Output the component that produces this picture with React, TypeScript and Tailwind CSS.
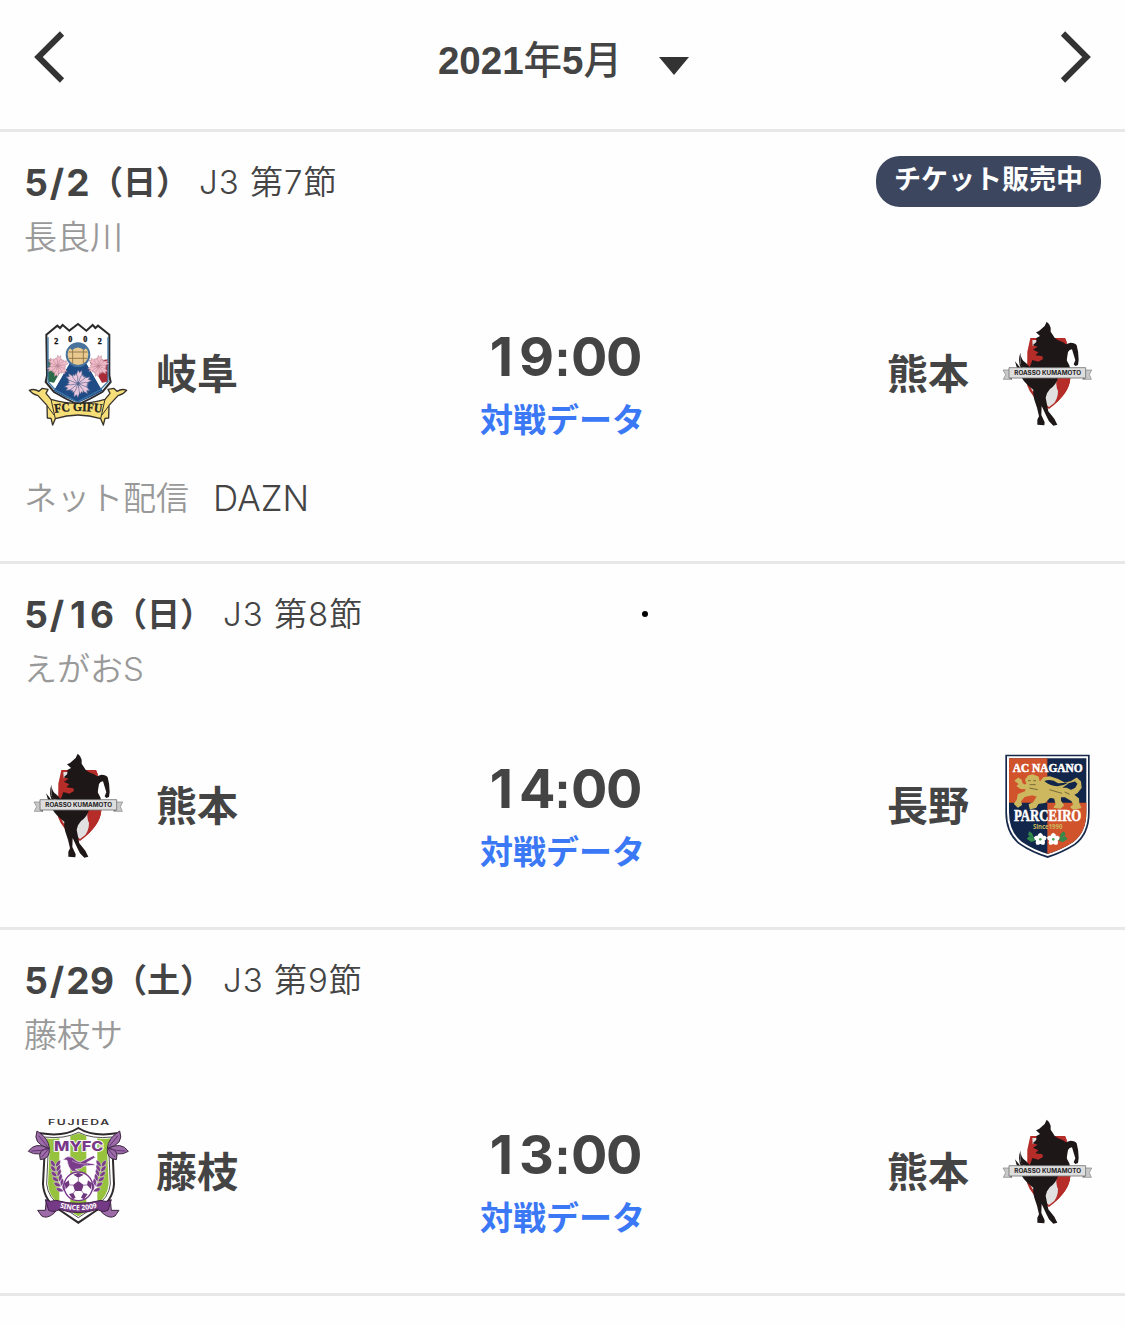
type Team = "gifu" | "kumamoto" | "nagano" | "fujieda";

interface Match {
  date: string;
  day: string;
  round: string;
  venue: string;
  time: string;
  home: Team;
  away: Team;
  ticket?: boolean;
  net?: string;
}

const TEAM_NAMES: Record<Team, string> = {
  gifu: "岐阜",
  kumamoto: "熊本",
  nagano: "長野",
  fujieda: "藤枝",
};

const matches: Match[] = [
  { date: "5/2", day: "（日）", round: "7", venue: "長良川", time: "19:00", home: "gifu", away: "kumamoto", ticket: true, net: "DAZN" },
  { date: "5/16", day: "（日）", round: "8", venue: "えがおS", time: "14:00", home: "kumamoto", away: "nagano" },
  { date: "5/29", day: "（土）", round: "9", venue: "藤枝サ", time: "13:00", home: "fujieda", away: "kumamoto" },
];

const PETALS = [0, 30, 60, 90, 120, 150, 180, 210, 240, 270, 300, 330];

function Flower({ x, y, r, fill, line }: { x: number; y: number; r: number; fill: string; line: string }) {
  return (
    <g transform={`translate(${x} ${y}) scale(${r / 40})`}>
      {PETALS.map((a, i) => (
        <path
          key={a}
          d={i % 2 ? "M0 0L-7 -22L-3 -30L0 -25L4 -30L7 -20Z" : "M0 0L-8 -26L-5 -39L0 -32L6 -39L8 -24Z"}
          fill={fill}
          stroke={line}
          strokeWidth="1.6"
          transform={`rotate(${a + 8})`}
        />
      ))}
      <circle r="4" fill={line} />
    </g>
  );
}

function GifuLogo() {
  return (
    <svg viewBox="12 30 324 324" className="size-[108px] shrink-0">
      <path d="M79 74L112 47L120 54L128 45L148 62L174 42L199 62L218 45L226 54L234 47L268 74V196L272 216L247 246Q213 266 174 284Q135 266 102 246L77 216L81 196Z" fill="#fff" stroke="#2b2a2c" strokeWidth="6" />
      <path d="M84 148L140 156L104 222L84 214Z" fill="#2c6b49" />
      <path d="M264 148L208 156L244 222L264 214Z" fill="#a92b38" />
      <path d="M150 156L198 156L248 242Q210 264 174 278Q136 264 101 242Z" fill="#204c86" />
      <path d="M140 153L150 158L106 234L86 216L102 218ZM208 153L198 158L242 234L264 216L246 218Z" fill="#fff" />
      <path d="M84 82V215L106 240L172 276L240 240L264 215V82" fill="none" stroke="#3f78a8" strokeWidth="4" />
      <Flower x={113} y={168} r={33} fill="#f0bcc9" line="#b98494" />
      <Flower x={235} y={168} r={33} fill="#f0bcc9" line="#b98494" />
      <Flower x={174} y={221} r={42} fill="#eac7dc" line="#52658f" />
      <circle cx="174" cy="134" r="34" fill="#e9c98e" stroke="#47739c" strokeWidth="6" />
      <path d="M158 110V160M190 110V160M145 126H203M146 145H202M158 110Q174 100 190 110" fill="none" stroke="#866d43" strokeWidth="2.5" />
      <path d="M146 111Q174 90 202 111L192 120Q174 105 156 120Z" fill="#47739c" />
      <g fontFamily="Liberation Serif" fontWeight="700" fontSize="24" fill="#111" stroke="#111" strokeWidth="1" textAnchor="middle">
        <text x="109" y="103">2</text>
        <text x="151" y="96">0</text>
        <text x="196" y="96">0</text>
        <text x="239" y="103">2</text>
      </g>
      <path d="M28 241Q42 235 57 244L67 235L84 238L78 250L93 268Q174 292 255 268L270 250L264 238L281 235L291 244Q306 235 320 241Q308 254 294 257L267 286L266 324L255 325L250 345L242 326Q174 304 106 326L98 345L93 325L82 324L81 286L54 257Q40 254 28 241Z" fill="#f6df79" stroke="#37322b" strokeWidth="4" strokeLinejoin="round" />
      <path d="M93 268L106 326M255 268L242 326M82 288L102 315M266 288L246 315" fill="none" stroke="#37322b" strokeWidth="3" />
      <path id="gifu-arc" d="M104 308Q174 298 246 308" fill="none" />
      <text fontFamily="Liberation Serif" fontWeight="700" fontSize="38" fill="#262521" stroke="#262521" strokeWidth="1">
        <textPath href="#gifu-arc" startOffset="0" textLength="142" lengthAdjust="spacingAndGlyphs">FC GIFU</textPath>
      </text>
    </svg>
  );
}

function KumamotoLogo() {
  return (
    <svg viewBox="9 30 324 324" className="size-[108px] shrink-0">
      <path d="M121 84H225L230 96V172L241 205Q239 250 177 297Q123 265 111 225L112 125Z" fill="#b52c28" />
      <path d="M127 90H142L136 104L128 109ZM187 90H220L224 103V170H180ZM121 206H207Q197 229 205 243Q212 260 201 273L177 291Q127 255 119 225Z" fill="#e1e1e2" />
      <path d="M186 84H225L230 96V128L222 108L206 95L190 92Z" fill="#b52c28" />
      <path d="M201 205H241Q238 249 185 290Q205 266 204 242Q195 224 201 205Z" fill="#b52c28" />
      <path d="M170 35L177 42L182 53V65L190 77Q194 86 208 92Q221 96 228 103L241 98Q256 98 260 106Q266 126 266 150L264 165L256 168L251 163L256 151L246 118Q238 119 234 126L230 151L238 166L240 174H110L96 170L91 160L91 128Q93 151 108 159L119 171L123 162L127 150L145 155L159 147L157 139L136 136L145 127L129 119L143 110L128 106L139 96L139 84L150 78L138 67L147 63L164 48Z" fill="#1e1718" />
      <path d="M101 204H204Q199 224 180 237L171 250L167 263L175 304L193 326L202 344L190 347L177 334L169 318L155 288L154 315L164 337L163 346L142 344V329L147 319L141 293L133 269Q128 250 130 239Q106 222 94 202Z" fill="#1e1718" />
      <path d="M75 154Q82 182 94 204H119L90 159L91 128Q82 156 94 177Z" fill="#1e1718" />
      <path d="M39 180L62 180V208H40L47 194ZM305 180L283 180V208H304L298 194Z" fill="#c9c9ca" stroke="#818181" strokeWidth="2" />
      <path d="M57 173H287V204H57Z" fill="#dededf" stroke="#747474" strokeWidth="2.5" />
      <path d="M57 204L66 211V204M287 204L278 211V204" fill="#777" />
      <text x="173" y="195" textAnchor="middle" textLength="200" lengthAdjust="spacingAndGlyphs" fontFamily="Inter" fontWeight="700" fontSize="17" fill="#242122">ROASSO KUMAMOTO</text>
    </svg>
  );
}

function Blossom({ x }: { x: number }) {
  return (
    <g transform={`translate(${x} 292)`}>
      {[0, 72, 144, 216, 288].map((a) => (
        <path key={a} d="M0 2L-9 -8L-6 -16L0 -20L6 -16L9 -8Z" fill="#fff" transform={`rotate(${a})`} />
      ))}
      <circle r="4" fill="#50a45a" />
    </g>
  );
}

function NaganoLogo() {
  return (
    <svg viewBox="9 30 324 324" className="size-[108px] shrink-0">
      <path d="M46 38H299V211Q299 278 256 309Q219 333 173 348Q125 333 90 309Q46 278 46 211Z" fill="#15284a" />
      <path d="M51 43H294V211Q294 274 253 305Q217 328 173 342Q128 328 93 305Q51 274 51 211Z" fill="#fff" />
      <path d="M57 49H289V211Q289 271 250 300Q215 323 173 336Q130 323 96 300Q57 271 57 211Z" fill="#11264a" />
      <path d="M57 49H172V182H57ZM172 182H289V211Q289 271 250 300Q215 323 172 336Z" fill="#d0532c" />
      <path d="M76 116L85 109L93 114L96 125L104 130L111 126L107 113L116 102L129 99L144 105L147 118L155 125L176 131L207 139L229 139L243 146L257 139L265 125L256 116L235 122L216 136L189 140L161 131L152 119L161 108L179 105L202 112L224 124L244 119L260 109L271 119L273 137L262 151L250 158L265 170L266 184L272 197L250 201L243 195L252 188L246 176L226 164L211 164L211 177L220 190L211 198L193 196L199 187L194 168L180 165L164 181L144 184L137 196L121 200L118 188L131 182L143 162L127 158L103 163L91 177L94 188L84 195L74 185L82 174L85 158L107 149L109 140L93 139L82 132L89 126Z" fill="#cdb85f" stroke="#cdb85f" strokeWidth="4" strokeLinejoin="round" />
      <path d="M163 117Q185 108 204 124L235 122Q218 132 202 133Q178 132 163 117Z" fill="#11264a" />
      <path d="M114 116H122M130 116H138M119 128H137M118 138L143 143M178 143L216 154M224 150L239 157" stroke="#776a36" strokeWidth="3" fill="none" />
      <g textAnchor="middle" fontWeight="700" fill="#fff">
        <text x="173" y="90" textLength="210" lengthAdjust="spacingAndGlyphs" fontFamily="Liberation Serif" stroke="#fff" strokeWidth="1.5" fontSize="36">AC NAGANO</text>
        <text x="173" y="237" textLength="202" lengthAdjust="spacingAndGlyphs" fontFamily="Liberation Serif" stroke="#fff" strokeWidth="1.5" fontSize="47">PARCEIRO</text>
        <text x="173" y="260" textLength="88" lengthAdjust="spacingAndGlyphs" fontFamily="Noto Sans" fontSize="20" fill="#cdb85f">Since1990</text>
      </g>
      <path d="M135 292L118 282L110 290L124 300L136 296L126 274L118 268L114 278ZM206 292L224 282L233 290L219 300L206 296L213 274L222 268L227 278Z" fill="#328a4b" />
      <Blossom x={151} />
      <Blossom x={190} />
    </svg>
  );
}

function Laurel() {
  return (
    <>
      {[0, 1, 2, 3, 4, 5].map((i) => (
        <g key={i} transform={`translate(${121 + i * i * 0.7} ${164 + i * 15}) rotate(${-i * 7})`}>
          <path d="M0 13Q-18 8 -14 -8Q1 -4 0 13ZM0 13Q19 8 15 -8Q1 -4 0 13Z" fill="#7a3e8b" stroke="#fff" strokeWidth="1" />
        </g>
      ))}
    </>
  );
}

function FujiedaLogo() {
  return (
    <svg viewBox="27 30 324 324" className="size-[108px] shrink-0">
      <text x="193" y="51" textAnchor="middle" textLength="188" lengthAdjust="spacingAndGlyphs" letterSpacing="3" fontFamily="Inter" fontWeight="600" fontSize="22" fill="#3a3435">FUJIEDA</text>
      <path d="M77 76Q149 87 190 60Q232 87 304 76L292 111L297 228Q294 280 246 306L190 344L134 306Q87 280 84 228L90 111Z" fill="#fff" stroke="#2f292c" strokeWidth="6" />
      <path d="M88 87Q149 94 190 73Q231 94 292 87L281 119L286 228Q282 271 239 296L190 329L141 296Q99 271 95 228L100 119Z" fill="#fff" stroke="#2f292c" strokeWidth="2.5" />
      <path d="M94 91Q112 94 133 91V288Q101 264 99 227L104 121ZM166 84L190 76L214 84V310L190 325L166 310ZM247 91Q268 94 286 91L276 121L281 227Q278 264 247 288Z" fill="#96c23e" />
      {/* leaves, ribbon and laurel share the same shapes on both sides */}
      {[false, true].map((flip) => (
        <g key={String(flip)} transform={flip ? "translate(380 0) scale(-1 1)" : undefined}>
          <path d="M103 121Q60 100 40 130Q72 150 103 121Z" fill="#9c6ba8" stroke="#3d2a42" strokeWidth="3" />
          <path d="M103 121Q101 90 66 69Q51 108 103 121Z" fill="#9c6ba8" stroke="#3d2a42" strokeWidth="3" />
          <path d="M103 121Q66 123 76 155Q106 153 103 121Z" fill="#9c6ba8" stroke="#3d2a42" strokeWidth="3" />
          <path d="M49 129Q77 129 99 122M71 83L98 116M80 147L101 123" stroke="#633273" strokeWidth="3" fill="none" />
          <Laurel />
          <path d="M94 276L91 307H68L80 324Q96 334 118 315L127 300Z" fill="#9c6ba8" stroke="#3d2a42" strokeWidth="3" />
        </g>
      ))}
      <text x="191" y="128" textAnchor="middle" textLength="148" lengthAdjust="spacingAndGlyphs" fontFamily="Inter" fontWeight="800" fontSize="41" fill="#783889" stroke="#fff" strokeWidth="5" paintOrder="stroke">MYFC</text>
      <path d="M143 155L156 146Q172 143 184 158L196 162L235 143L242 148L215 164L238 168L240 172L207 174Q198 185 181 184L193 190H171Q158 177 156 157Z" fill="#7b3c8c" stroke="#fff" strokeWidth="2" />
      <path d="M171 158Q187 169 219 168" fill="none" stroke="#cab2d0" strokeWidth="2" />
      <circle cx="190" cy="235" r="43" fill="#fff" stroke="#783889" strokeWidth="4" />
      <path d="M190 219L206 231L200 249H180L174 231ZM175 200L190 194L206 200L190 209ZM149 226L161 217L164 231L152 244ZM231 226L219 217L216 231L228 244ZM162 258L175 255L182 269L173 274ZM218 258L205 255L198 269L207 274Z" fill="#70377f" />
      <path d="M190 209V219M164 231H174M216 231H206M180 249L175 255M200 249L205 255" stroke="#70377f" strokeWidth="2" />
      <path d="M91 275Q105 284 122 277Q190 295 258 277Q277 284 289 275L279 307Q263 315 247 304Q190 324 133 304Q117 315 101 307Z" fill="#753a85" stroke="#412149" strokeWidth="3" />
      <path id="since-arc" d="M132 298Q190 315 250 298" fill="none" />
      <text fontFamily="Noto Sans" fontWeight="700" fontSize="21" fill="#fff">
        <textPath href="#since-arc" startOffset="2" textLength="114" lengthAdjust="spacingAndGlyphs">SINCE 2009</textPath>
      </text>
    </svg>
  );
}

function TeamLogo({ team }: { team: Team }) {
  if (team === "gifu") return <GifuLogo />;
  if (team === "nagano") return <NaganoLogo />;
  if (team === "fujieda") return <FujiedaLogo />;
  return <KumamotoLogo />;
}

function MonthHeader() {
  return (
    <header className="flex h-[132px] items-start justify-between border-b-[3px] border-[#e8e8e8] px-[34px] pt-[31px]">
      <button type="button" aria-label="前の月">
        <svg viewBox="0 0 31 52" className="h-[52px] w-[31px]" fill="none" stroke="#333" strokeWidth="6">
          <path d="M28 2.5L4.4 26L28 49.5" />
        </svg>
      </button>
      <button type="button" className="ml-0.5 flex h-[61px] items-center">
        <span className="whitespace-nowrap font-['Liberation_Sans','Noto_Sans_CJK_JP',sans-serif] text-[38.5px] leading-none font-bold text-[#444]">
          2021<span className="font-medium">年</span>5<span className="font-medium">月</span>
        </span>
        <svg viewBox="0 0 30 18" className="mt-2 ml-[37px] h-[18px] w-[30px]">
          <path d="M0 0H30L15 18Z" fill="#333" />
        </svg>
      </button>
      <button type="button" aria-label="次の月">
        <svg viewBox="0 0 31 52" className="h-[52px] w-[31px]" fill="none" stroke="#333" strokeWidth="6">
          <path d="M3 2.5L26.6 26L3 49.5" />
        </svg>
      </button>
    </header>
  );
}

// every digit takes the same width, the separator a narrower one
function MatchDate({ value }: { value: string }) {
  return (
    <span className="flex text-[37px] font-bold">
      {value.split("").map((c, i) => (
        <span key={i} className={c === "/" ? "w-[18px] text-center" : "w-6 text-center"}>{c}</span>
      ))}
    </span>
  );
}

function KickOff({ value }: { value: string }) {
  return (
    <time className="flex items-baseline text-[54px]">
      {value.split("").map((c, i) => (
        <span
          key={i}
          className={c === ":" ? "w-[17px] text-center font-['Liberation_Sans',sans-serif] text-[51px]" : "w-[35px] text-center"}
        >
          {c}
        </span>
      ))}
    </time>
  );
}

function MatchCard({ match }: { match: Match }) {
  return (
    <section className="border-b-[3px] border-[#e8e8e8] px-6 pt-6">
      <div className="flex h-[51px] items-center justify-between">
        <h2 className="flex items-center pt-0.5 text-[33px] leading-none whitespace-nowrap">
          <MatchDate value={match.date} />
          <span className="font-bold">{match.day}</span>
          <span className="ml-2.5 font-[350] tracking-[1px]">J3 第{match.round}節</span>
        </h2>
        {match.ticket && (
          <span className="flex h-[51px] w-[225px] justify-center rounded-[24px] bg-[#3c465f] pt-2.5 text-[27px] leading-none font-bold text-white">
            チケット販売中
          </span>
        )}
      </div>
      <p className="flex h-[60px] items-center text-[33px] leading-none font-[350] text-[#999]">{match.venue}</p>
      <div className="mt-[53px] flex h-[108px] items-center">
        <TeamLogo team={match.home} />
        <span className="ml-6 text-[41px] leading-none font-bold">{TEAM_NAMES[match.home]}</span>
        <div className="flex flex-1 flex-col items-center pt-[18px] leading-none font-bold">
          <KickOff value={match.time} />
          <a className="mt-5 text-[33px] text-[#3b78f5]">対戦データ</a>
        </div>
        <span className="mr-6 text-[41px] leading-none font-bold">{TEAM_NAMES[match.away]}</span>
        <TeamLogo team={match.away} />
      </div>
      {match.net ? (
        <dl className="mt-[45px] mb-[38px] flex h-[50px] items-center text-[33px] leading-none font-[350]">
          <dt className="text-[#999]">ネット配信</dt>
          <dd className="ml-6 text-[35px]">{match.net}</dd>
        </dl>
      ) : (
        <div className="h-[67px]" />
      )}
    </section>
  );
}

export default function App() {
  return (
    <main className="relative h-[1326px] w-[1125px] overflow-hidden bg-[#fefefe] font-['Inter','Noto_Sans_CJK_JP',sans-serif] text-[#444]">
      <MonthHeader />
      {matches.map((match) => (
        <MatchCard key={match.date} match={match} />
      ))}
      <span className="absolute top-[610.5px] left-[641.5px] size-1.5 rounded-full bg-black" />
    </main>
  );
}
